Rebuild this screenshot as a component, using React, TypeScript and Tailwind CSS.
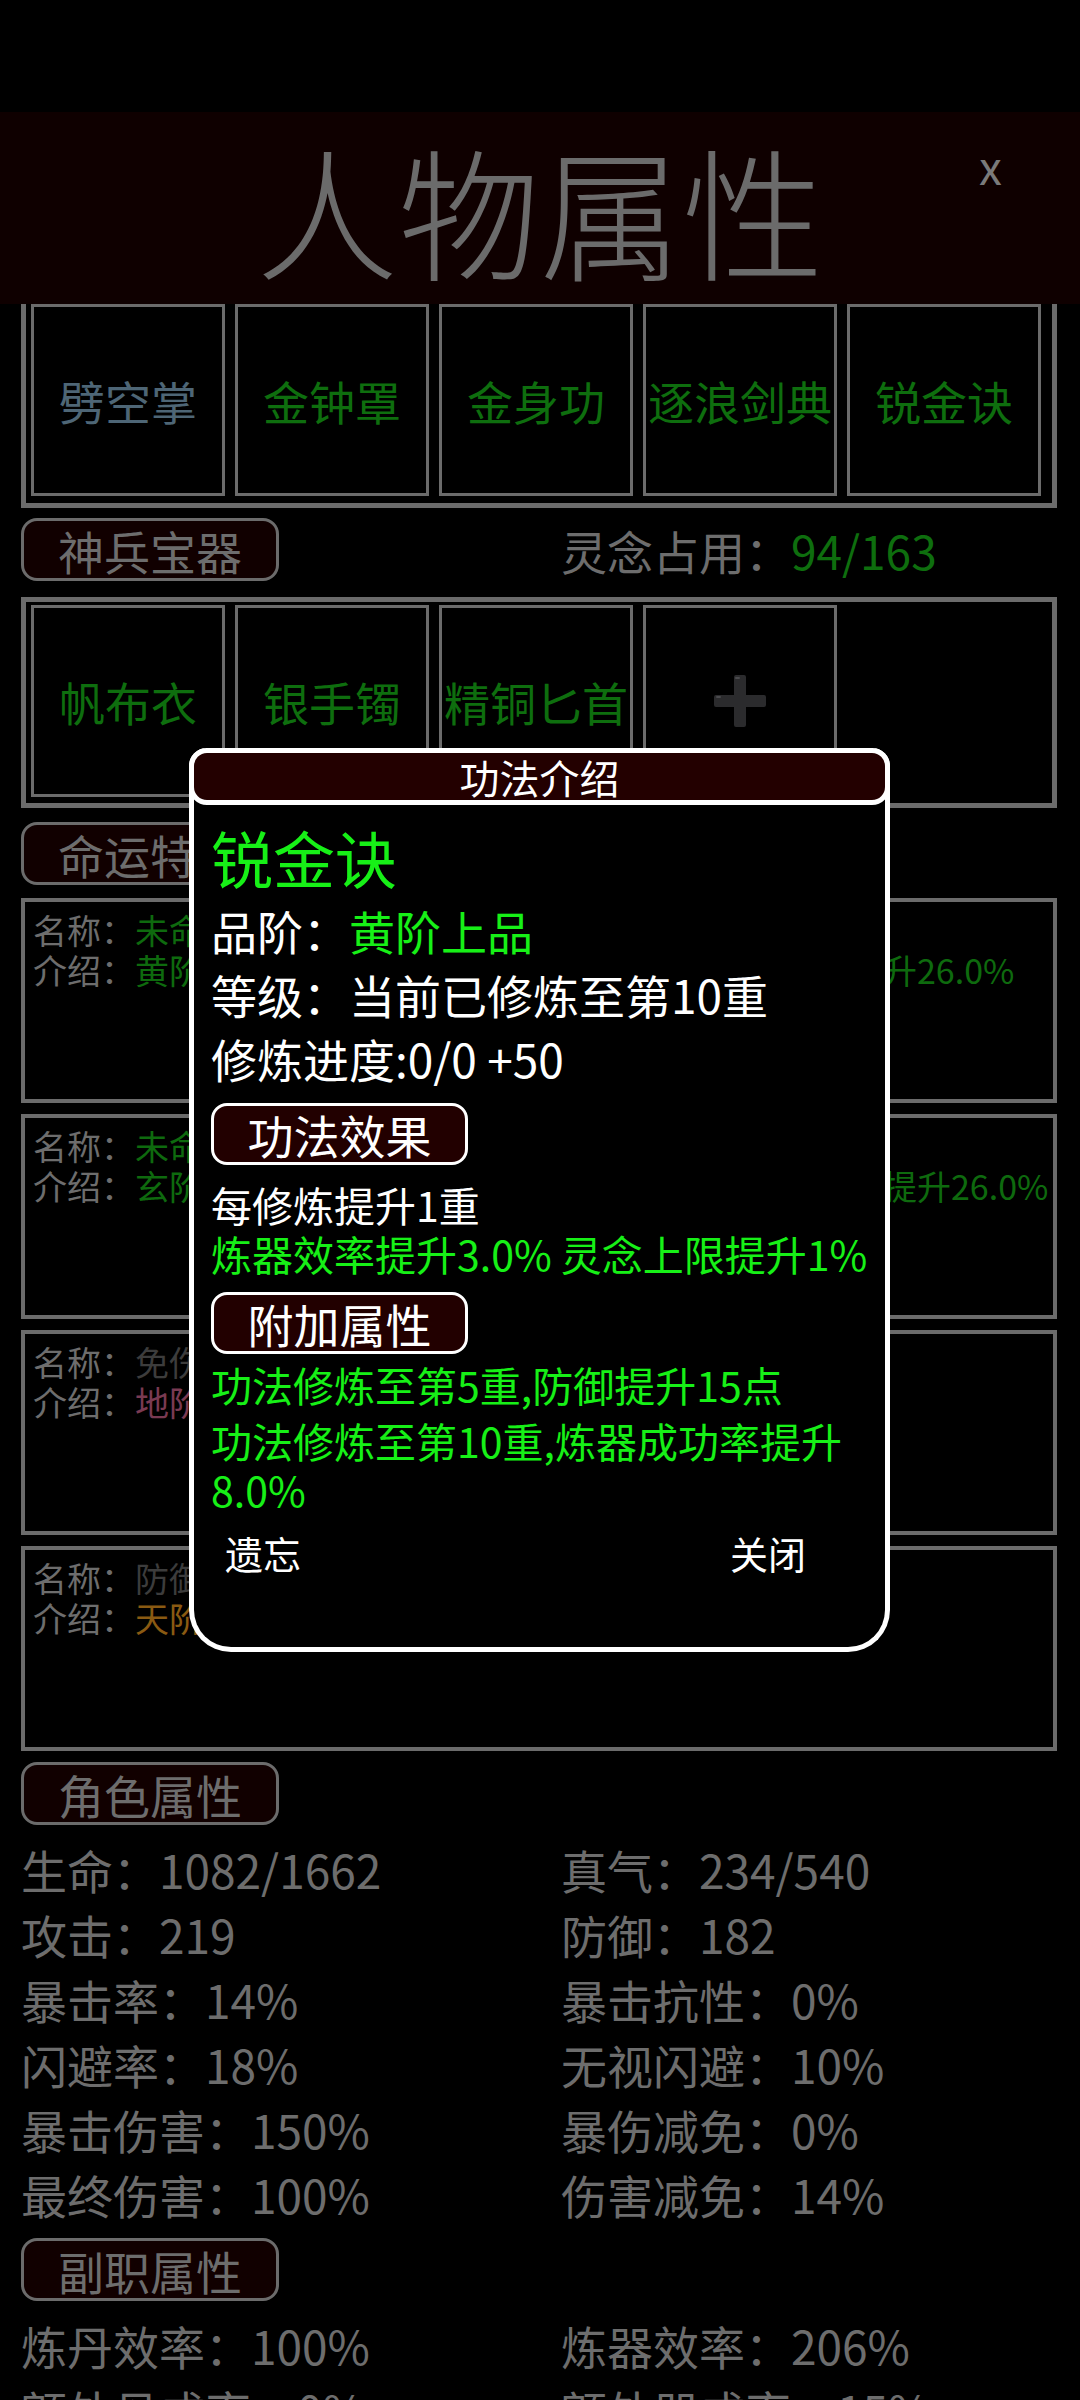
import React from "react";

const skills = [
  { name: "劈空掌", color: "text-[#4e6676]" },
  { name: "金钟罩", color: "text-[#0e6e0e]" },
  { name: "金身功", color: "text-[#0e6e0e]" },
  { name: "逐浪剑典", color: "text-[#0e6e0e]" },
  { name: "锐金诀", color: "text-[#0e6e0e]" },
];

const gear = ["帆布衣", "银手镯", "精铜匕首"];

const fates = [
  {
    name: "未命名",
    nameColor: "text-[#0e6a0e]",
    desc: "黄阶特性，出生于炼器世家，天生的炼器成功率提升26.0%",
    descColor: "text-[#0e6a0e]",
  },
  {
    name: "未命名",
    nameColor: "text-[#0e6a0e]",
    desc: "玄阶特性，自幼修习剑法，剑法造诣远超群，攻击提升26.0%",
    descColor: "text-[#0e6a0e]",
  },
  {
    name: "免伤之体",
    nameColor: "text-[#3c3c3c]",
    desc: "地阶特性，受到伤害降低",
    descColor: "text-[#7a3a52]",
  },
  {
    name: "防御大师",
    nameColor: "text-[#3c3c3c]",
    desc: "天阶特性，防御提升",
    descColor: "text-[#8a5a12]",
  },
];

const stats: [string, string][] = [
  ["生命", "1082/1662"],
  ["真气", "234/540"],
  ["攻击", "219"],
  ["防御", "182"],
  ["暴击率", "14%"],
  ["暴击抗性", "0%"],
  ["闪避率", "18%"],
  ["无视闪避", "10%"],
  ["暴击伤害", "150%"],
  ["暴伤减免", "0%"],
  ["最终伤害", "100%"],
  ["伤害减免", "14%"],
];

const jobStats: [string, string][] = [
  ["炼丹效率", "100%"],
  ["炼器效率", "206%"],
  ["额外丹成率", "0%"],
  ["额外器成率", "15%"],
];

function Tag({ children }: { children: React.ReactNode }) {
  return (
    <div className="flex h-[63px] w-[258px] items-center justify-center rounded-[16px] border-[3px] border-[#6b6b6b] bg-[#110000] text-[46px] leading-none text-[#6d6d6d]">
      {children}
    </div>
  );
}

function Cell({ children }: { children?: React.ReactNode }) {
  return (
    <div className="flex h-[192px] w-[194px] shrink-0 items-center justify-center whitespace-nowrap border-[3px] border-[#6b6b6b] text-[46px] leading-none">
      {children}
    </div>
  );
}

function PlusIcon() {
  return (
    <svg width="54" height="54" viewBox="0 0 54 54">
      <path
        d="M21 3a2 2 0 0 1 2-2h8a2 2 0 0 1 2 2v18h18a2 2 0 0 1 2 2v8a2 2 0 0 1-2 2H33v18a2 2 0 0 1-2 2h-8a2 2 0 0 1-2-2V33H3a2 2 0 0 1-2-2v-8a2 2 0 0 1 2-2h18z"
        fill="#2b2b2d"
      />
      <path d="M23 4h3M4 23h3" stroke="#4a4a4d" strokeWidth="2" strokeLinecap="round" />
    </svg>
  );
}

function StatGrid({ items }: { items: [string, string][] }) {
  return (
    <div className="mt-[12px] grid grid-cols-[540px_1fr] pl-[21px] text-[46px] leading-[65px] text-[#6d6d6d]">
      {items.map(([k, v]) => (
        <div key={k} className="whitespace-nowrap">
          {k}：{v}
        </div>
      ))}
    </div>
  );
}

function Dialog() {
  return (
    <div className="absolute left-[189px] top-[748px] z-20 w-[701px] rounded-b-[42px] rounded-t-[18px] border-x-[5px] border-b-[5px] border-white bg-black text-white">
      <div className="-mx-[5px] flex h-[57px] items-center justify-center rounded-[18px] border-[5px] border-white bg-[#230000] text-[40px] leading-none">
        功法介绍
      </div>
      <div className="pb-[69px] pl-[17px] pr-[5px]">
        <div className="mt-[14px] text-[62px] leading-[76px] text-[#17f017]">锐金诀</div>
        <div className="mt-[3px] text-[46px] leading-[64px]">
          <div>
            品阶：<span className="text-[#17f017]">黄阶上品</span>
          </div>
          <div>等级：当前已修炼至第10重</div>
          <div>修炼进度:0/0 +50</div>
        </div>
        <div className="mt-[13px] flex h-[62px] w-[257px] items-center justify-center rounded-[16px] border-[3px] border-white bg-[#220000] text-[46px] leading-none">
          功法效果
        </div>
        <div className="mt-[15px] text-[41px] leading-[49px]">
          <div>每修炼提升1重</div>
          <div className="whitespace-nowrap text-[#17f017]">炼器效率提升3.0% 灵念上限提升1%</div>
        </div>
        <div className="mt-[14px] flex h-[62px] w-[257px] items-center justify-center rounded-[16px] border-[3px] border-white bg-[#220000] text-[46px] leading-none">
          附加属性
        </div>
        <div className="mt-[6px] text-[41px] leading-[49px] text-[#17f017]">
          功法修炼至第5重,防御提升15点
        </div>
        <div className="mt-[7px] text-[41px] leading-[49px] text-[#17f017]">
          功法修炼至第10重,炼器成功率提升8.0%
        </div>
        <div className="mt-[14px] flex text-[38px] leading-[50px]">
          <span className="ml-[14px]">遗忘</span>
          <span className="ml-[429px]">关闭</span>
        </div>
      </div>
    </div>
  );
}

export default function App() {
  return (
    <div className="relative h-[2400px] w-[1080px] overflow-hidden bg-black font-['Noto_Sans_CJK_SC','Noto_Sans',sans-serif]">
      <div className="h-[112px] bg-black" />
      <div className="relative z-10 flex h-[192px] items-center justify-center bg-[#0f0000]">
        <span className="text-[142px] font-light leading-none text-[#6b6b6b]">人物属性</span>
        <span className="absolute right-[78px] top-[30px] text-[46px] leading-none text-[#7a7a7a]">x</span>
      </div>

      {/* 功法 */}
      <div className="-mt-[8px] ml-[21px] flex w-[1036px] gap-[10px] border-[5px] border-[#6b6b6b] pb-[7px] pl-[5px] pt-[3px]">
        {skills.map((s) => (
          <Cell key={s.name}>
            <span className={s.color}>{s.name}</span>
          </Cell>
        ))}
      </div>

      {/* 神兵宝器 */}
      <div className="mt-[10px] grid grid-cols-[540px_1fr] items-center pl-[21px]">
        <Tag>神兵宝器</Tag>
        <div className="text-[46px] leading-none text-[#6d6d6d]">
          灵念占用：<span className="text-[#0e6e0e]">94/163</span>
        </div>
      </div>
      <div className="ml-[21px] mt-[16px] flex w-[1036px] gap-[10px] border-[5px] border-[#6b6b6b] pb-[6px] pl-[5px] pt-[3px]">
        {gear.map((g) => (
          <Cell key={g}>
            <span className="text-[#0e6e0e]">{g}</span>
          </Cell>
        ))}
        <Cell>
          <PlusIcon />
        </Cell>
      </div>

      {/* 命运特性 */}
      <div className="ml-[21px] mt-[14px]">
        <Tag>命运特性</Tag>
      </div>
      <div className="ml-[21px] mt-[13px] flex w-[1036px] flex-col gap-[11px]">
        {fates.map((f, i) => (
          <div
            key={i}
            className="h-[205px] overflow-hidden border-[4px] border-[#6b6b6b] px-[8px] pt-[8px] text-[34px] leading-[40px] text-[#6d6d6d]"
          >
            <div className="whitespace-nowrap">
              名称：<span className={f.nameColor}>{f.name}</span>
            </div>
            <div className="whitespace-nowrap">
              介绍：<span className={f.descColor}>{f.desc}</span>
            </div>
          </div>
        ))}
      </div>

      {/* 角色属性 */}
      <div className="ml-[21px] mt-[11px]">
        <Tag>角色属性</Tag>
      </div>
      <StatGrid items={stats} />

      {/* 副职属性 */}
      <div className="ml-[21px] mt-[11px]">
        <Tag>副职属性</Tag>
      </div>
      <StatGrid items={jobStats} />

      <Dialog />
    </div>
  );
}
